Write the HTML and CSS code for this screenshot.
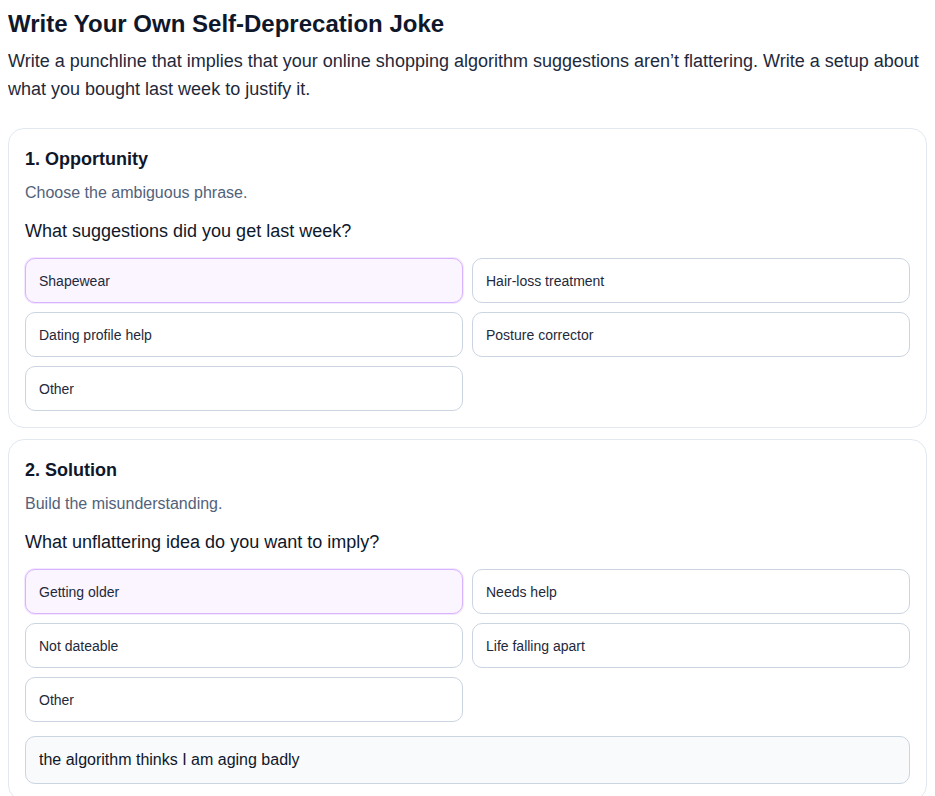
FILE: index.html
```html
<!DOCTYPE html>
<html lang="en">
<head>
<meta charset="utf-8">
<title>Write Your Own Self-Deprecation Joke</title>
<link rel="stylesheet" href="styles.css">
</head>
<body>
<h1 class="title">Write Your Own Self-Deprecation Joke</h1>
<p class="intro">Write a punchline that implies that your online shopping algorithm suggestions aren’t flattering. Write a setup about what you bought last week to justify it.</p>

<section class="card">
  <h2 class="step">1. Opportunity</h2>
  <p class="hint">Choose the ambiguous phrase.</p>
  <p class="question">What suggestions did you get last week?</p>
  <div class="options">
    <button class="option selected">Shapewear</button>
    <button class="option">Hair-loss treatment</button>
    <button class="option">Dating profile help</button>
    <button class="option">Posture corrector</button>
    <button class="option">Other</button>
  </div>
</section>

<section class="card">
  <h2 class="step">2. Solution</h2>
  <p class="hint">Build the misunderstanding.</p>
  <p class="question">What unflattering idea do you want to imply?</p>
  <div class="options">
    <button class="option selected">Getting older</button>
    <button class="option">Needs help</button>
    <button class="option">Not dateable</button>
    <button class="option">Life falling apart</button>
    <button class="option">Other</button>
  </div>
  <input class="answer" type="text" value="the algorithm thinks I am aging badly">
</section>
</body>
</html>
```

FILE: styles.css
```css
body {
  margin: 8px;
  font-family: "Liberation Sans", Arial, Helvetica, sans-serif;
  color: #0f172a;
  background: #ffffff;
}

.title {
  margin: 0;
  font-size: 24px;
  line-height: 31px;
  font-weight: 700;
  color: #0f172a;
}

.intro {
  margin: 8px 0 25px;
  font-size: 18px;
  line-height: 28px;
  color: #1e293b;
}

.card {
  border: 1px solid #e2e8f0;
  border-radius: 16px;
  padding: 17px 16px 16px;
  margin-bottom: 11px;
}

.step {
  margin: 0;
  font-size: 18px;
  line-height: 27px;
  font-weight: 700;
  color: #0f172a;
}

.hint {
  margin: 8px 0 0;
  font-size: 16px;
  line-height: 24px;
  color: #52627a;
}

.question {
  margin: 13px 0 0;
  font-size: 18px;
  line-height: 27px;
  color: #0f172a;
}

.options {
  margin-top: 13px;
  display: grid;
  grid-template-columns: 1fr 1fr;
  gap: 9px;
}

.option {
  height: 45px;
  box-sizing: border-box;
  border: 1px solid #cbd5e1;
  border-radius: 10px;
  background: #ffffff;
  padding: 0 13px;
  text-align: left;
  font-family: inherit;
  font-size: 14px;
  color: #1e293b;
}

.option.selected {
  background: #faf5ff;
  border-color: #d8b4fe;
  box-shadow: 0 0 0 1px #f3e8ff;
}

.answer {
  display: block;
  width: 100%;
  box-sizing: border-box;
  margin-top: 14px;
  height: 48px;
  border: 1px solid #cbd5e1;
  border-radius: 10px;
  background: #f8fafc;
  padding: 0 13px;
  font-family: inherit;
  font-size: 16px;
  color: #0f172a;
}
```
